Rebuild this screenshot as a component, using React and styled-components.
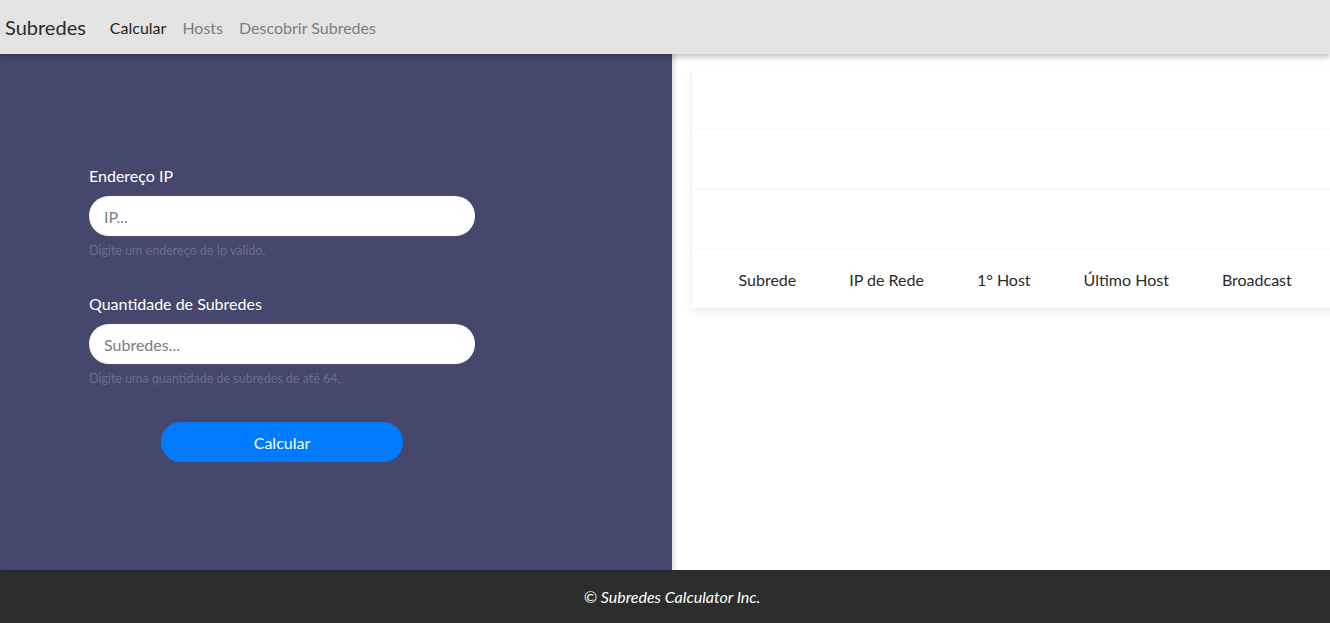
import React from "react";
import styled, { createGlobalStyle } from "styled-components";

const GlobalStyle = createGlobalStyle`
  html, body {
    margin: 0;
    padding: 0;
    overflow: hidden;
  }

  body {
    font-family: Lato, "Open Sans", "Liberation Sans", sans-serif;
    color: #212529;
  }
`;

const Page = styled.div`
  display: flex;
  flex-direction: column;
  height: 623px;
  width: 1330px;
  overflow: hidden;
`;

const NavBar = styled.nav`
  display: flex;
  align-items: center;
  height: 54px;
  padding: 0 5px;
  background: #e3e3e3;
  box-shadow: 0 3px 6px rgba(0, 0, 0, 0.25);
  position: relative;
  z-index: 3;
  flex-shrink: 0;
`;

const Brand = styled.span`
  font-size: 20px;
  color: #2b2b2b;
  margin-right: 24px;
`;

const NavLink = styled.a`
  font-size: 16px;
  color: ${(p) => (p.active ? "#1f1f1f" : "#7e7e7e")};
  margin-right: 16px;
  text-decoration: none;
`;

const Main = styled.div`
  display: flex;
  flex: 1;
  min-height: 0;
`;

const FormPanel = styled.section`
  width: 672px;
  flex-shrink: 0;
  background: #45486c;
  display: flex;
  flex-direction: column;
  justify-content: center;
  padding: 0 0 0 89px;
  box-sizing: border-box;
  box-shadow: 3px 0 4px rgba(0, 0, 0, 0.12);
  position: relative;
  z-index: 2;
`;

const Form = styled.form`
  width: 386px;
  display: flex;
  flex-direction: column;
  margin-top: 4px;
`;

const Field = styled.div`
  display: flex;
  flex-direction: column;
  margin-bottom: 36px;
`;

const Label = styled.label`
  color: #ffffff;
  font-size: 16px;
  margin-bottom: 11px;
`;

const Input = styled.input`
  height: 40px;
  border: none;
  border-radius: 20px;
  padding: 0 15px;
  font-size: 16px;
  font-family: inherit;
  background: #fff;
  outline: none;

  &::placeholder {
    color: #7a7d84;
  }
`;

const Help = styled.small`
  color: #6a6d8c;
  font-size: 12.5px;
  margin-top: 7px;
`;

const Button = styled.button`
  align-self: center;
  width: 242px;
  height: 40px;
  border: none;
  border-radius: 20px;
  background: #007bff;
  color: #fff;
  font-size: 16px;
  font-family: inherit;
  margin-top: 0;
`;

const ResultPanel = styled.section`
  flex: 1;
  background: #fff;
  padding: 14px 0 0 20px;
  overflow: hidden;
`;

const Card = styled.div`
  width: 760px;
  background: #fff;
  box-shadow: 0 3px 8px rgba(0, 0, 0, 0.09);
`;

const Row = styled.div`
  height: 60px;
  display: flex;
  align-items: center;
  padding-left: 20px;
  border-top: ${(p) => (p.first ? "none" : "2px solid #fafafa")};
  box-sizing: border-box;
`;

const HeadCell = styled.div`
  font-size: 16px;
  color: #2a2a2a;
  padding: 0 26.5px;
  white-space: nowrap;
`;

const Footer = styled.footer`
  height: 53px;
  flex-shrink: 0;
  background: #2c2e2e;
  display: flex;
  align-items: center;
  justify-content: center;
  padding-left: 14px;
  color: #fff;
  font-style: italic;
  font-size: 16px;
`;

const columns = ["Subrede", "IP de Rede", "1° Host", "Último Host", "Broadcast"];

const App = () => {
  return (
    <>
      <GlobalStyle />
      <Page>
        <NavBar>
          <Brand>Subredes</Brand>
          <NavLink active>Calcular</NavLink>
          <NavLink>Hosts</NavLink>
          <NavLink>Descobrir Subredes</NavLink>
        </NavBar>
        <Main>
          <FormPanel>
            <Form onSubmit={(e) => e.preventDefault()}>
              <Field>
                <Label>Endereço IP</Label>
                <Input placeholder="IP..." />
                <Help>Digite um endereço de Ip válido.</Help>
              </Field>
              <Field>
                <Label>Quantidade de Subredes</Label>
                <Input placeholder="Subredes..." />
                <Help>Digite uma quantidade de subredes de até 64.</Help>
              </Field>
              <Button type="submit">Calcular</Button>
            </Form>
          </FormPanel>
          <ResultPanel>
            <Card>
              <Row first />
              <Row />
              <Row />
              <Row>
                {columns.map((c) => (
                  <HeadCell key={c}>{c}</HeadCell>
                ))}
              </Row>
            </Card>
          </ResultPanel>
        </Main>
        <Footer>© Subredes Calculator Inc.</Footer>
      </Page>
    </>
  );
};

export default App;
